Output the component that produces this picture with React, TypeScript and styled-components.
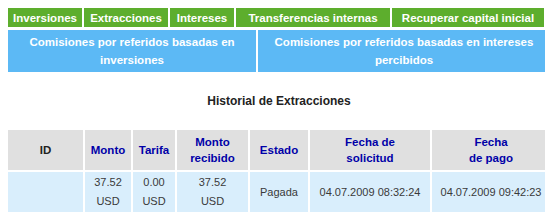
import styled, { createGlobalStyle } from "styled-components";

const GlobalStyle = createGlobalStyle`
  body {
    margin: 8px;
    background: #ffffff;
    font-family: "Liberation Sans", Arial, sans-serif;
    font-size: 11px;
  }
`;

const Page = styled.div`
  width: 542px;
  display: flex;
  flex-direction: column;
`;

const NavRow = styled.div`
  display: flex;
  gap: 2px;
  height: 19px;
`;

const NavTab = styled.div<{ $w: number }>`
  width: ${(p) => p.$w}px;
  background: #5dae2d;
  color: #ffffff;
  font-weight: bold;
  font-size: 11.5px;
  display: flex;
  align-items: center;
  justify-content: center;
  white-space: nowrap;
`;

const SubRow = styled.div`
  display: flex;
  gap: 2px;
  margin-top: 3px;
  height: 42px;
`;

const SubTab = styled.div<{ $w: number }>`
  width: ${(p) => p.$w}px;
  background: #5cb9f5;
  color: #ffffff;
  font-weight: bold;
  font-size: 11.5px;
  line-height: 18px;
  display: flex;
  align-items: center;
  justify-content: center;
  text-align: center;
  padding: 0 8px;
  box-sizing: border-box;
`;

const Title = styled.div`
  margin-top: 21px;
  text-align: center;
  font-weight: bold;
  font-size: 12px;
  color: #222222;
  line-height: 16px;
`;

const Table = styled.div`
  margin-top: 21px;
  display: grid;
  grid-template-columns: 75px 46px 42px 71px 58px 120px 118px;
  grid-template-rows: 40px 40px;
  gap: 2px;
`;

const HeadCell = styled.div<{ $dark?: boolean }>`
  background: #e0e0e0;
  color: ${(p) => (p.$dark ? "#222222" : "#0000a8")};
  font-weight: bold;
  font-size: 11.5px;
  line-height: 16px;
  display: flex;
  align-items: center;
  justify-content: center;
  text-align: center;
`;

const DataCell = styled.div`
  background: #d9eefc;
  color: #3a3a3a;
  line-height: 19px;
  display: flex;
  align-items: center;
  justify-content: center;
  text-align: center;
`;

const tabs: [string, number][] = [
  ["Inversiones", 74],
  ["Extracciones", 84],
  ["Intereses", 64],
  ["Transferencias internas", 154],
  ["Recuperar capital inicial", 152],
];

export default function App() {
  return (
    <>
      <GlobalStyle />
      <Page>
        <NavRow>
          {tabs.map(([t, w]) => (
            <NavTab key={t} $w={w}>
              {t}
            </NavTab>
          ))}
        </NavRow>
        <SubRow>
          <SubTab $w={248}>Comisiones por referidos basadas en inversiones</SubTab>
          <SubTab $w={292}>
            Comisiones por referidos basadas en intereses percibidos
          </SubTab>
        </SubRow>
        <Title>Historial de Extracciones</Title>
        <Table>
          <HeadCell $dark>ID</HeadCell>
          <HeadCell>Monto</HeadCell>
          <HeadCell>Tarifa</HeadCell>
          <HeadCell>
            Monto
            <br />
            recibido
          </HeadCell>
          <HeadCell>Estado</HeadCell>
          <HeadCell>
            Fecha de
            <br />
            solicitud
          </HeadCell>
          <HeadCell>
            Fecha
            <br />
            de pago
          </HeadCell>
          <DataCell></DataCell>
          <DataCell>
            37.52
            <br />
            USD
          </DataCell>
          <DataCell>
            0.00
            <br />
            USD
          </DataCell>
          <DataCell>
            37.52
            <br />
            USD
          </DataCell>
          <DataCell>Pagada</DataCell>
          <DataCell>04.07.2009 08:32:24</DataCell>
          <DataCell>04.07.2009 09:42:23</DataCell>
        </Table>
      </Page>
    </>
  );
}
